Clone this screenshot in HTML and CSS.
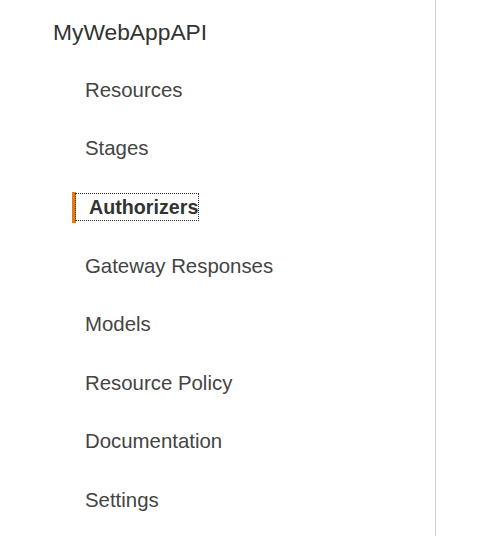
FILE: index.html
```html
<!DOCTYPE html>
<html>
<head>
<meta charset="utf-8">
<link rel="stylesheet" href="styles.css">
</head>
<body>
<div class="layout">
  <nav class="sidebar">
    <div class="api-title">MyWebAppAPI</div>
    <ul class="nav-list">
      <li class="nav-item"><a class="nav-link">Resources</a></li>
      <li class="nav-item"><a class="nav-link">Stages</a></li>
      <li class="nav-item active"><a class="nav-link"><span class="focus">Authorizers</span></a></li>
      <li class="nav-item"><a class="nav-link">Gateway Responses</a></li>
      <li class="nav-item"><a class="nav-link">Models</a></li>
      <li class="nav-item"><a class="nav-link">Resource Policy</a></li>
      <li class="nav-item"><a class="nav-link">Documentation</a></li>
      <li class="nav-item"><a class="nav-link">Settings</a></li>
    </ul>
  </nav>
  <main class="content"></main>
</div>
</body>
</html>
```

FILE: styles.css
```css
* { box-sizing: border-box; }
html, body { margin: 0; padding: 0; background: #fff; }
body {
  font-family: "Liberation Sans", Arial, Helvetica, sans-serif;
  color: #444;
  height: 536px;
  overflow: hidden;
}
.layout {
  display: flex;
  height: 536px;
}
.sidebar {
  width: 436px;
  border-right: 1px solid #d0d0d0;
  padding: 19px 0 0 53px;
}
.api-title {
  font-size: 22.8px;
  line-height: 26px;
  color: #333;
  margin: 0 0 16px 0;
}
.nav-list {
  list-style: none;
  margin: 0;
  padding: 0 0 0 19px;
}
.nav-item {
  height: 58.6px;
  display: flex;
  align-items: center;
  margin-left: 13px;
}
.nav-link {
  font-size: 20.4px;
  color: #444;
}
.nav-item.active {
  border-left: 4px solid #e47911;
  height: 31px;
  margin: 13.8px 0 13.8px 0;
}
.nav-item.active .nav-link {
  font-weight: bold;
  color: #333;
}
.focus {
  display: inline-block;
  outline: 1px dotted #333;
  padding: 2px 0 2px 13px;
  line-height: 22px;
  font-size: 19.7px;
}
.content { flex: 1; }
```
